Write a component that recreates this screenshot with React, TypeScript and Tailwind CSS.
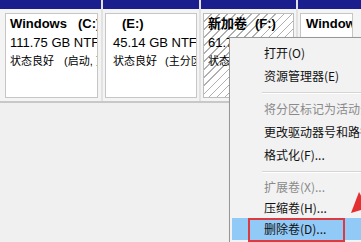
import type { ReactNode } from "react";

// ── 菜单项 ──────────────────────────────────────────────
type MenuEntry =
  | { sep: true; h: string }
  | { sep?: false; label: string; h: string; disabled?: boolean; active?: boolean };

const MENU: MenuEntry[] = [
  { label: "打开(O)", h: "h-[23px]" },
  { label: "资源管理器(E)", h: "h-[23px]" },
  { sep: true, h: "h-[10px]" },
  { label: "将分区标记为活动分区(M)", h: "h-[23px]", disabled: true },
  { label: "更改驱动器号和路径(C)...", h: "h-[23px]" },
  { label: "格式化(F)...", h: "h-[23px]" },
  { sep: true, h: "h-[10px]" },
  { label: "扩展卷(X)...", h: "h-[21px]", disabled: true },
  { label: "压缩卷(H)...", h: "h-[21px]" },
  { label: "删除卷(D)...", h: "h-[22px]", active: true },
];

// ── 分区列 ──────────────────────────────────────────────
function Column({ width, pad, children }: { width: string; pad: string; children: ReactNode }) {
  return (
    <div className={`flex shrink-0 flex-col ${width}`}>
      <div className="h-[9px] bg-[#1b1f8e]" />
      <div className={`flex-1 bg-[#f4f4f4] pt-[4px] pb-[3px] ${pad}`}>{children}</div>
    </div>
  );
}

function DiskRow() {
  return (
    <div className="flex h-[103px] gap-[2px] border-b-2 border-[#c8c8c8] bg-[#e2e2e2]">
      <Column width="w-[101px]" pad="pl-[5px] pr-[3px]">
        <div className="h-full overflow-hidden whitespace-nowrap border border-[#c6c6c6] bg-white pl-[4px] leading-[19px]">
          <div className="text-[13px] font-bold">
            Windows<span className="ml-[11px]">(C:)</span>
          </div>
          <div className="text-[13px]">111.75 GB NTFS</div>
          <div className="text-[11px]">
            状态良好<span className="ml-[10px]">(启动, 页面文件, 故障转储, 主分区)</span>
          </div>
        </div>
      </Column>

      <Column width="w-[96px]" pad="pl-[2px] pr-[2px]">
        <div className="h-full overflow-hidden whitespace-nowrap border border-[#c6c6c6] bg-white pl-[7px] leading-[19px]">
          <div className="pl-[9px] text-[13px] font-bold">(E:)</div>
          <div className="text-[13px]">45.14 GB NTFS</div>
          <div className="text-[11px]">
            状态良好<span className="ml-[8px]">(主分区)</span>
          </div>
        </div>
      </Column>

      <Column width="w-[95px]" pad="pl-[2px] pr-[2px]">
        <div className="h-full overflow-hidden whitespace-nowrap border border-[#bcbcbc] bg-[image:repeating-linear-gradient(135deg,#ffffff_0px,#ffffff_4.6px,#b0b0b0_4.6px,#b0b0b0_5.7px)] pl-[4px] leading-[19px]">
          <div className="text-[13px] font-bold">
            新加卷<span className="ml-[8px]">(F:)</span>
          </div>
          <div className="text-[13px]">61.72 GB NTFS</div>
          <div className="text-[11px]">
            状态良好<span className="ml-[8px]">(主分区)</span>
          </div>
        </div>
      </Column>

      <Column width="flex-1" pad="pl-[2px] pr-[4px]">
        <div className="h-full w-[53px] overflow-hidden whitespace-nowrap border border-[#c6c6c6] bg-white pl-[5px] leading-[19px]">
          <div className="text-[13px] font-bold">Windows</div>
        </div>
      </Column>
    </div>
  );
}

// ── 右键菜单 ────────────────────────────────────────────
function ContextMenu() {
  return (
    <div className="absolute left-[229px] top-[37px] w-[170px] border border-[#979797] bg-[#f2f2f2] pt-[3px] pb-[3px] font-['Noto_Sans_CJK_SC',sans-serif] text-[12px] shadow-[2px_2px_3px_rgba(0,0,0,0.25)]">
      {MENU.map((m, i) =>
        m.sep ? (
          <div key={i} className={`flex items-center pl-[32px] ${m.h}`}>
            <div className="h-px w-full bg-[#d5d5d5] shadow-[0_1px_0_#ffffff]" />
          </div>
        ) : (
          <div
            key={i}
            className={`relative mx-[2px] flex items-center whitespace-nowrap pl-[32px] ${m.h} ${
              m.active ? "bg-[#91c9f7]" : ""
            } ${m.disabled ? "text-[#8a8a8a]" : "text-[#111]"}`}
          >
            {m.label}
            {m.active && (
              <div className="absolute left-[16px] top-0 h-[24px] w-[97px] border-2 border-[#dc3a3e]" />
            )}
          </div>
        )
      )}
    </div>
  );
}

export default function App() {
  return (
    <div className="relative h-[242px] w-[361px] overflow-hidden bg-[#f0f0f0] font-['Liberation_Sans','Noto_Sans_CJK_SC',sans-serif] text-black">
      <DiskRow />
      <ContextMenu />

      {/* 红色箭头 */}
      <svg className="absolute left-[346px] top-[186px]" width="24" height="34" viewBox="0 0 24 34">
        <polygon points="13,6 5,27 22,22" fill="#e3302f" />
      </svg>
    </div>
  );
}
